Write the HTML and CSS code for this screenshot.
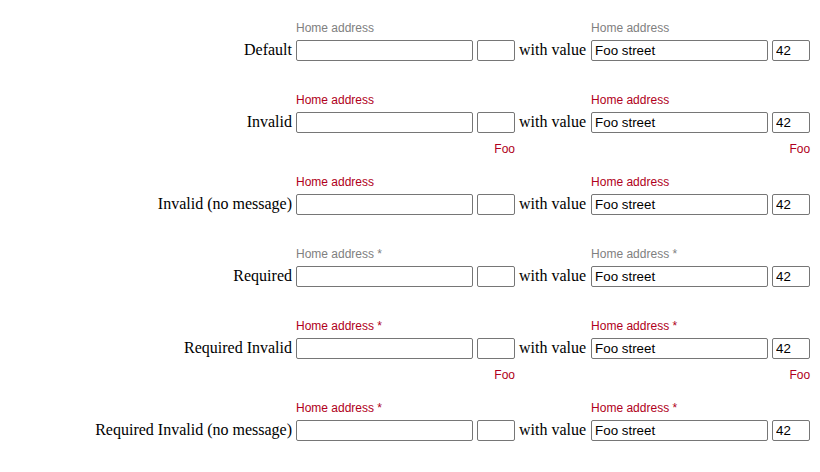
FILE: index.html
```html
<!DOCTYPE html>
<html>
<head>
<meta charset="utf-8">
<link rel="stylesheet" href="styles.css">
</head>
<body>
<div class="page">
  <div class="row">
    <div class="flabel a">Home address</div>
    <div class="flabel c">Home address</div>
    <div class="rlabel">Default</div>
    <input class="inp wide" type="text" value="">
    <input class="inp small" type="text" value="">
    <div class="with">with value</div>
    <input class="inp wide" type="text" value="Foo street">
    <input class="inp small" type="text" value="42">
    <div class="helper a"></div>
    <div class="helper c"></div>
  </div>

  <div class="row">
    <div class="flabel a invalid">Home address</div>
    <div class="flabel c invalid">Home address</div>
    <div class="rlabel">Invalid</div>
    <input class="inp wide" type="text" value="">
    <input class="inp small" type="text" value="">
    <div class="with">with value</div>
    <input class="inp wide" type="text" value="Foo street">
    <input class="inp small" type="text" value="42">
    <div class="helper a"><div class="error">Foo</div></div>
    <div class="helper c"><div class="error">Foo</div></div>
  </div>

  <div class="row">
    <div class="flabel a invalid">Home address</div>
    <div class="flabel c invalid">Home address</div>
    <div class="rlabel">Invalid (no message)</div>
    <input class="inp wide" type="text" value="">
    <input class="inp small" type="text" value="">
    <div class="with">with value</div>
    <input class="inp wide" type="text" value="Foo street">
    <input class="inp small" type="text" value="42">
    <div class="helper a"></div>
    <div class="helper c"></div>
  </div>

  <div class="row">
    <div class="flabel a">Home address *</div>
    <div class="flabel c">Home address *</div>
    <div class="rlabel">Required</div>
    <input class="inp wide" type="text" value="">
    <input class="inp small" type="text" value="">
    <div class="with">with value</div>
    <input class="inp wide" type="text" value="Foo street">
    <input class="inp small" type="text" value="42">
    <div class="helper a"></div>
    <div class="helper c"></div>
  </div>

  <div class="row">
    <div class="flabel a invalid">Home address *</div>
    <div class="flabel c invalid">Home address *</div>
    <div class="rlabel">Required Invalid</div>
    <input class="inp wide" type="text" value="">
    <input class="inp small" type="text" value="">
    <div class="with">with value</div>
    <input class="inp wide" type="text" value="Foo street">
    <input class="inp small" type="text" value="42">
    <div class="helper a"><div class="error">Foo</div></div>
    <div class="helper c"><div class="error">Foo</div></div>
  </div>

  <div class="row">
    <div class="flabel a invalid">Home address *</div>
    <div class="flabel c invalid">Home address *</div>
    <div class="rlabel">Required Invalid (no message)</div>
    <input class="inp wide" type="text" value="">
    <input class="inp small" type="text" value="">
    <div class="with">with value</div>
    <input class="inp wide" type="text" value="Foo street">
    <input class="inp small" type="text" value="42">
    <div class="helper a"></div>
    <div class="helper c"></div>
  </div>
</div>
</body>
</html>
```

FILE: styles.css
```css
html, body {
  margin: 0;
  padding: 0;
  background: #ffffff;
}

.page {
  padding-top: 21px;
  font-family: "Liberation Serif", "Times New Roman", serif;
  font-size: 16px;
  color: #000000;
}

.row {
  display: grid;
  grid-template-columns: 292px 177px 38px max-content 177px 38px;
  grid-template-rows: auto auto auto;
  justify-content: start;
  column-gap: 4px;
  align-items: baseline;
  margin-bottom: 19px;
}

.flabel {
  grid-row: 1;
  font-family: "Liberation Sans", Arial, sans-serif;
  font-size: 12px;
  line-height: 14px;
  color: #808080;
  margin-bottom: 5px;
  white-space: nowrap;
}

.flabel.a { grid-column: 2 / 4; }
.flabel.c { grid-column: 5 / 7; }

.flabel.invalid { color: #b00020; }

.rlabel {
  grid-row: 2;
  grid-column: 1;
  text-align: right;
  white-space: nowrap;
}

.with {
  grid-row: 2;
  grid-column: 4;
  padding-right: 1px;
  white-space: nowrap;
}

.inp {
  grid-row: 2;
  box-sizing: border-box;
  height: 21px;
  margin: 0;
  padding: 1px 3px;
  border: 1px solid #767676;
  border-radius: 2px;
  font-family: "Liberation Sans", Arial, sans-serif;
  font-size: 13.333px;
  color: #000000;
  background: #ffffff;
  outline: none;
}

.inp.wide { width: 177px; }
.inp.small { width: 38px; }

.helper {
  grid-row: 3;
  min-height: 13px;
  text-align: right;
}

.helper.a { grid-column: 2 / 4; }
.helper.c { grid-column: 5 / 7; }

.error {
  padding-top: 9px;
  font-family: "Liberation Sans", Arial, sans-serif;
  font-size: 12px;
  line-height: 14px;
  color: #b00020;
}
```
